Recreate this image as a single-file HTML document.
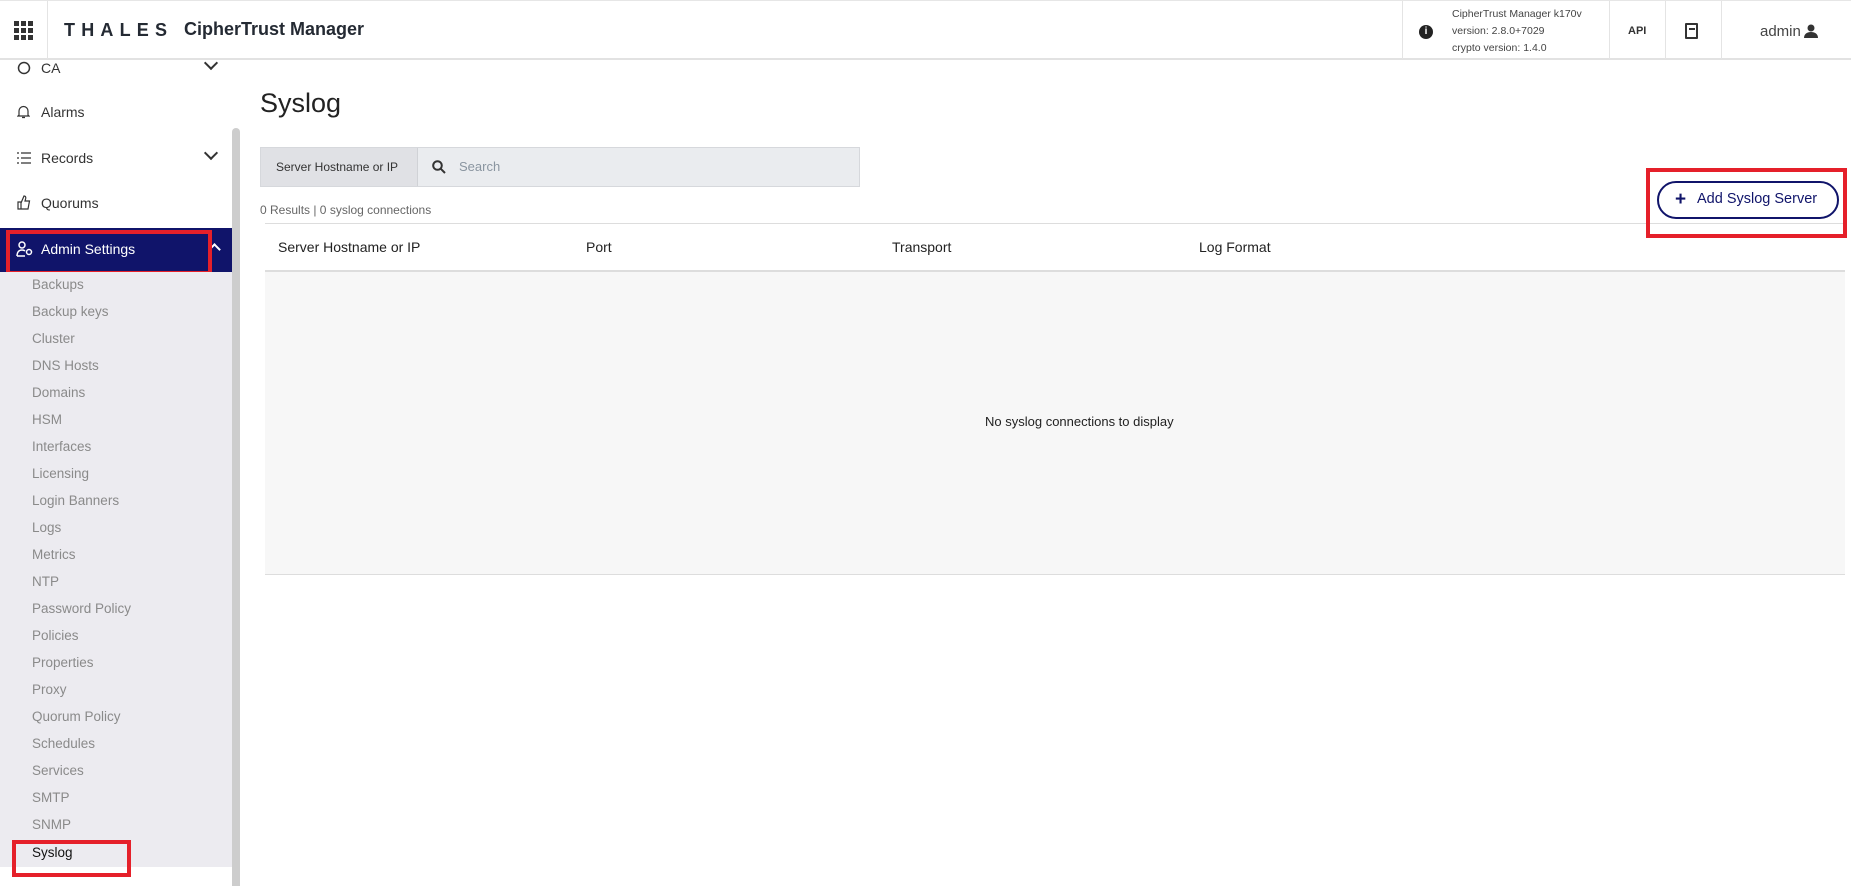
<!DOCTYPE html>
<html><head><meta charset="utf-8"><style>
*{box-sizing:border-box;margin:0;padding:0}
body{width:1858px;height:886px;overflow:hidden;background:#fff;font-family:"Liberation Sans",sans-serif;position:relative;color:#222}
.abs{position:absolute;white-space:nowrap}
#hdr{left:0;top:0;width:1851px;height:60px;background:#fff;border-bottom:2px solid #e2e2e2;border-top:1px solid #e6e6e6}
.vd{position:absolute;top:0;width:1px;height:58px;background:#e4e4e4}
#side{left:0;top:60px;width:232px;height:826px;background:#fff}
.it{position:absolute;left:0;width:232px;font-size:14px;color:#333;white-space:nowrap}
.it span{position:absolute;left:41px}
.sub{position:absolute;left:32px;font-size:13.5px;color:#8a8a8a;white-space:nowrap}
.chev{position:absolute;left:206px;width:10px;height:10px;border-right:2.5px solid #333;border-bottom:2.5px solid #333;transform:rotate(45deg)}
.th{position:absolute;top:239px;font-size:14px;color:#222;white-space:nowrap}
</style></head><body>
<div id="hdr" class="abs">
 <svg class="abs" style="left:14px;top:20px" width="20" height="20" viewBox="0 0 20 20" fill="#333">
  <rect x="0" y="0" width="5" height="5"/><rect x="7" y="0" width="5" height="5"/><rect x="14" y="0" width="5" height="5"/>
  <rect x="0" y="7" width="5" height="5"/><rect x="7" y="7" width="5" height="5"/><rect x="14" y="7" width="5" height="5"/>
  <rect x="0" y="14" width="5" height="5"/><rect x="7" y="14" width="5" height="5"/><rect x="14" y="14" width="5" height="5"/></svg>
 <div class="vd" style="left:47px"></div>
 <div class="abs" style="left:64px;top:19px;font-size:18px;font-weight:bold;letter-spacing:6.2px;color:#242a33">THALES</div>
 <div class="abs" style="left:184px;top:18px;font-size:18px;font-weight:bold;color:#242a33">CipherTrust Manager</div>
 <div class="vd" style="left:1402px"></div>
 <div class="abs" style="left:1419px;top:24px;width:14px;height:14px;border-radius:50%;background:#222;color:#fff;font-size:10px;font-weight:bold;text-align:center;line-height:14px">i</div>
 <div class="abs" style="left:1452px;top:5px;font-size:10.5px;line-height:17px;color:#444">CipherTrust Manager k170v<br>version: 2.8.0+7029<br>crypto version: 1.4.0</div>
 <div class="vd" style="left:1609px"></div>
 <div class="abs" style="left:1628px;top:24px;font-size:11px;font-weight:bold;color:#333">API</div>
 <div class="vd" style="left:1665px"></div>
 <div class="abs" style="left:1685px;top:22px;width:13px;height:16px;border:2px solid #333;border-radius:1px"></div>
 <div class="abs" style="left:1689px;top:27px;width:6px;height:1.5px;background:#333"></div>
 <div class="vd" style="left:1721px"></div>
 <div class="abs" style="left:1760px;top:22px;font-size:15px;color:#444">admin</div>
 <svg class="abs" style="left:1804px;top:23px" width="14" height="14" viewBox="0 0 14 14" fill="#333"><circle cx="7" cy="4" r="3.5"/><path d="M0 14c0-4 3-6 7-6s7 2 7 6z"/></svg>
</div>

<div id="side" class="abs">
 <div class="it" style="top:0;height:16px"><svg class="abs" style="left:17px;top:1px" width="14" height="14"><circle cx="7" cy="7" r="5.5" fill="none" stroke="#333" stroke-width="1.5"/></svg><span style="top:0">CA</span><div class="chev" style="top:-2px"></div></div>
 <div class="it" style="top:44px"><span style="top:0">Alarms</span><svg class="abs" style="left:17px;top:1px" width="13" height="14" viewBox="0 0 13 14"><path d="M2 10V6a4.5 4.5 0 0 1 9 0v4l1 1H1z M5 12.5h3" fill="none" stroke="#333" stroke-width="1.2"/></svg></div>
 <div class="it" style="top:90px"><span style="top:0">Records</span><svg class="abs" style="left:17px;top:2px" width="14" height="12" viewBox="0 0 14 12" stroke="#333" stroke-width="1.3"><path d="M0 1h2M4 1h10M0 6h2M4 6h10M0 11h2M4 11h10"/></svg><div class="chev" style="top:-2px"></div></div>
 <div class="it" style="top:135px"><span style="top:0">Quorums</span><svg class="abs" style="left:17px;top:0" width="14" height="15" viewBox="0 0 14 15"><path d="M1 7h3v7H1z M4 8l3-7c1.5 0 2 1 1.7 2.5L8 6h4.5l-1.5 8H4" fill="none" stroke="#333" stroke-width="1.2"/></svg></div>
 <div class="abs" style="left:0;top:168px;width:232px;height:44px;background:#10146a"></div>
 <div class="abs" style="left:16px;top:181px;width:18px;height:16px"><svg width="18" height="16" viewBox="0 0 18 16" fill="none" stroke="#fff" stroke-width="1.5"><circle cx="6" cy="4" r="3"/><path d="M1 15c0-4 2-6 5-6 1.5 0 2.5.5 3 1M1 15h8"/><circle cx="13" cy="11" r="2.5"/></svg></div>
 <div class="abs" style="left:41px;top:181px;font-size:14px;color:#fff">Admin Settings</div>
 <div class="abs" style="left:210px;top:185px;width:9px;height:9px;border-left:2.5px solid #fff;border-top:2.5px solid #fff;transform:rotate(45deg)"></div>
 <div class="abs" style="left:6px;top:170px;width:206px;height:45px;border:4px solid #e5202a"></div>
 <div class="abs" style="left:0;top:212px;width:232px;height:595px;background:#ecebf0"></div>
 <div class="abs" style="left:232px;top:68px;width:8px;height:758px;background:#cdcdcd;border-radius:4px 4px 0 0"></div>
</div>
<div class="abs" style="left:0;top:0;width:232px">
 <div class="sub" style="top:277px">Backups</div>
 <div class="sub" style="top:304px">Backup keys</div>
 <div class="sub" style="top:331px">Cluster</div>
 <div class="sub" style="top:358px">DNS Hosts</div>
 <div class="sub" style="top:385px">Domains</div>
 <div class="sub" style="top:412px">HSM</div>
 <div class="sub" style="top:439px">Interfaces</div>
 <div class="sub" style="top:466px">Licensing</div>
 <div class="sub" style="top:493px">Login Banners</div>
 <div class="sub" style="top:520px">Logs</div>
 <div class="sub" style="top:547px">Metrics</div>
 <div class="sub" style="top:574px">NTP</div>
 <div class="sub" style="top:601px">Password Policy</div>
 <div class="sub" style="top:628px">Policies</div>
 <div class="sub" style="top:655px">Properties</div>
 <div class="sub" style="top:682px">Proxy</div>
 <div class="sub" style="top:709px">Quorum Policy</div>
 <div class="sub" style="top:736px">Schedules</div>
 <div class="sub" style="top:763px">Services</div>
 <div class="sub" style="top:790px">SMTP</div>
 <div class="sub" style="top:817px">SNMP</div>
 <div class="sub" style="top:845px;color:#111">Syslog</div>
 <div class="abs" style="left:12px;top:840px;width:119px;height:37px;border:4px solid #e5202a"></div>
</div>

<div class="abs" style="left:260px;top:88px;font-size:27px;color:#222">Syslog</div>
<div class="abs" style="left:260px;top:147px;width:600px;height:40px;background:#eaecef;border:1px solid #d6d8dc"></div>
<div class="abs" style="left:261px;top:148px;width:157px;height:38px;background:#e0e1e5;border-right:1px solid #d0d2d6;font-size:12px;color:#333;line-height:38px;padding-left:15px">Server Hostname or IP</div>
<svg class="abs" style="left:432px;top:160px" width="14" height="14" viewBox="0 0 14 14" fill="none" stroke="#333" stroke-width="2"><circle cx="5.5" cy="5.5" r="4.3"/><path d="M8.8 8.8L13 13"/></svg>
<div class="abs" style="left:459px;top:159px;font-size:13px;color:#8a95a0">Search</div>
<div class="abs" style="left:260px;top:203px;font-size:12px;color:#666">0 Results | 0 syslog connections</div>
<div class="abs" style="left:265px;top:223px;width:1580px;height:1px;background:#ddd"></div>
<div class="th" style="left:278px">Server Hostname or IP</div>
<div class="th" style="left:586px">Port</div>
<div class="th" style="left:892px">Transport</div>
<div class="th" style="left:1199px">Log Format</div>
<div class="abs" style="left:265px;top:270px;width:1580px;height:305px;background:#f7f7f7;border-top:2px solid #ddd;border-bottom:1px solid #ddd"></div>
<div class="abs" style="left:985px;top:414px;font-size:13px;color:#222">No syslog connections to display</div>
<div class="abs" style="left:1657px;top:181px;width:182px;height:38px;border:2.5px solid #10146a;border-radius:19px;background:#fff"></div>
<div class="abs" style="left:1675px;top:190px;font-size:19px;font-weight:bold;color:#10146a;line-height:19px">+</div>
<div class="abs" style="left:1697px;top:191px;font-size:14.5px;color:#10146a">Add Syslog Server</div>
<div class="abs" style="left:1646px;top:168px;width:201px;height:70px;border:4px solid #e5202a"></div>
</body></html>
